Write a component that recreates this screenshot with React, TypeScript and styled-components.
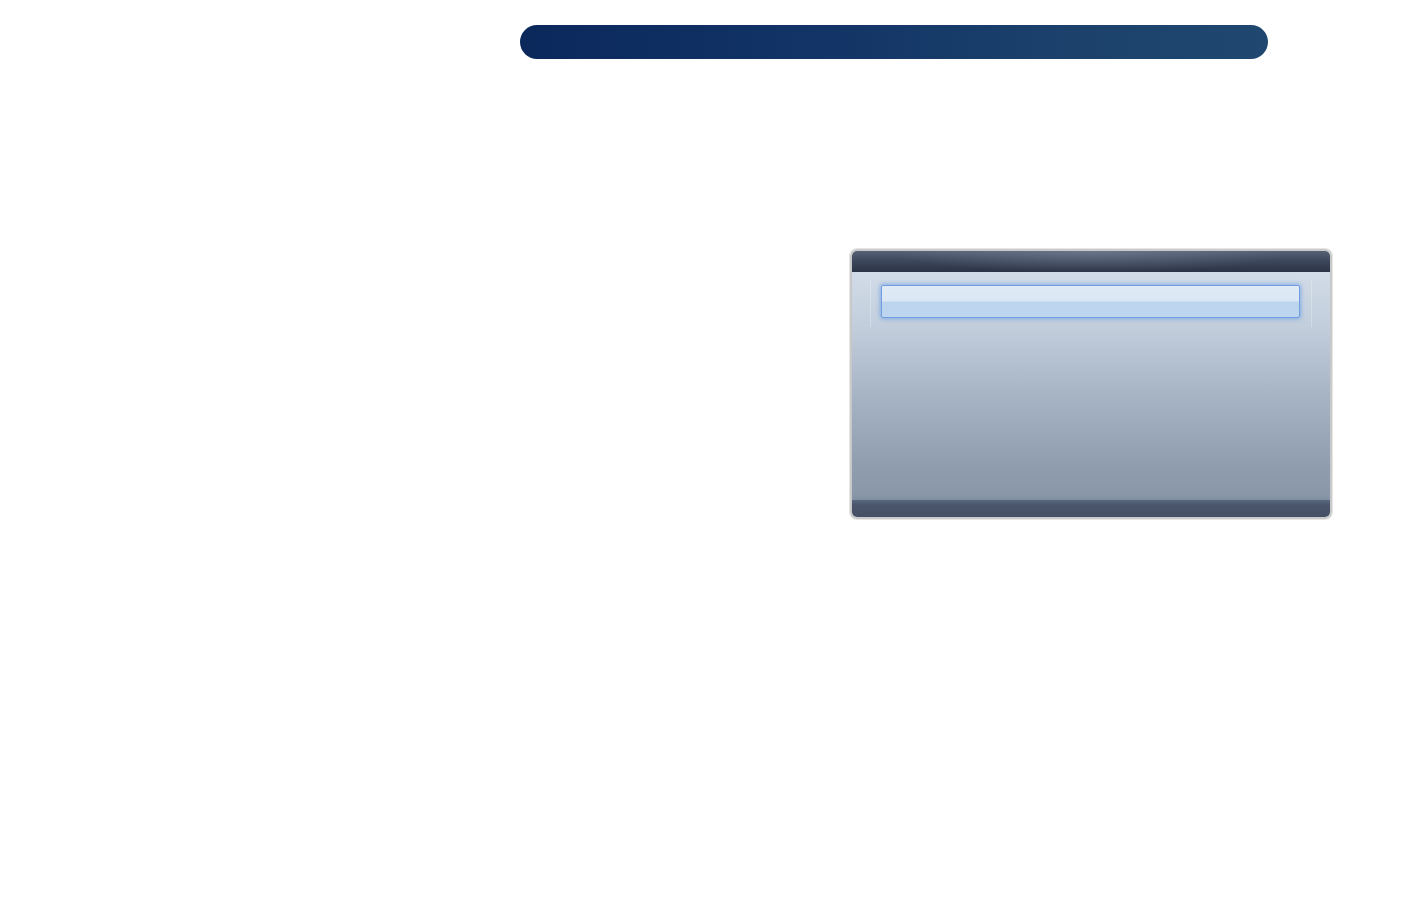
import React from 'react'
import styled, { createGlobalStyle } from 'styled-components'

const Global = createGlobalStyle`
    html, body {
        margin:0;
        padding:0;
        background:#ffffff;
        font-family:"Liberation Sans", Arial, sans-serif;
    }
`

const Page = styled.div`
    width:1404px;
    height:918px;
    display:flex;
    flex-direction:column;
    align-items:flex-start;
`

const Banner = styled.div`
    margin-top:25px;
    margin-left:520px;
    width:748px;
    height:34px;
    border-radius:17px;
    background:linear-gradient(90deg, #0b285b 0%, #123466 40%, #1c426c 75%, #1f4770 100%);
`

const Panel = styled.div`
    margin-top:190px;
    margin-left:850px;
    width:478px;
    height:266px;
    border:2px solid #c9c9c9;
    border-radius:7px;
    overflow:hidden;
    display:flex;
    flex-direction:column;
    box-shadow:0 0 0 1px #e6e6e6;
`

const Header = styled.div`
    height:21px;
    flex-shrink:0;
    background:
        radial-gradient(ellipse 55% 140% at 50% 0%, rgba(130,142,162,0.45), rgba(130,142,162,0) 75%),
        linear-gradient(180deg, #566175 0%, #3c465a 50%, #2b3446 100%);
`

const Body = styled.div`
    flex:1;
    display:flex;
    padding:8px 18px 0 18px;
    background:linear-gradient(180deg, #d2dce8 0%, #c1cddb 25%, #a6b3c3 55%, #909daf 85%, #8996a8 100%);
`

const Rail = styled.div`
    flex:1;
    height:42px;
    border-left:1px solid rgba(255,255,255,0.25);
    border-right:1px solid rgba(255,255,255,0.25);
    padding:5px 11px 0 10px;
`

const Item = styled.div`
    height:31px;
    border:1px solid #6f9fe0;
    border-radius:2px;
    box-shadow:0 0 4px 1px rgba(110,160,230,0.75);
    background:linear-gradient(180deg, #e0eaf6 0%, #dbe7f5 48%, #bdd4ef 52%, #bed5ef 100%);
`

const Footer = styled.div`
    height:17px;
    flex-shrink:0;
    background:linear-gradient(180deg, #5a6880 0%, #4a556b 30%, #455066 100%);
    box-shadow:0 -2px 3px rgba(120,135,155,0.5);
`

const App: React.FC = () => {
    return <Page>
        <Global />
        <Banner />
        <Panel>
            <Header />
            <Body>
                <Rail>
                    <Item />
                </Rail>
            </Body>
            <Footer />
        </Panel>
    </Page>
}

export default App
